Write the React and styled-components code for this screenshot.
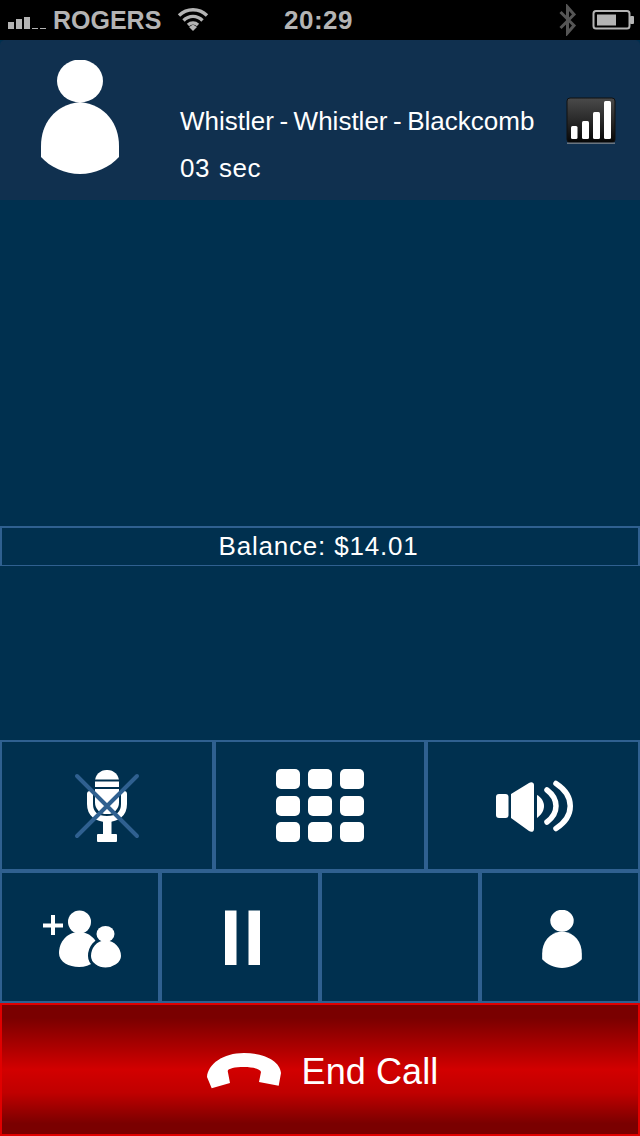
import React from 'react';
import styled, { createGlobalStyle } from 'styled-components';

const GlobalStyle = createGlobalStyle`
  html, body {
    margin: 0;
    padding: 0;
    background: #000;
  }
`;

const Screen = styled.div`
  width: 640px;
  height: 1136px;
  display: flex;
  flex-direction: column;
  overflow: hidden;
  background: #00304f;
  font-family: "Liberation Sans", Arial, sans-serif;
  color: #fff;
`;

const StatusBar = styled.div`
  height: 40px;
  flex: none;
  background: #000;
  display: grid;
  grid-template-columns: 1fr auto 1fr;
  align-items: center;
  color: #b4b4b4;
  font-size: 26px;
  font-weight: bold;
`;

const StatusLeft = styled.div`
  display: flex;
  align-items: center;
  padding-left: 8px;
`;

const Carrier = styled.span`
  margin-left: 5px;
  margin-right: 16px;
  font-size: 25px;
`;

const Clock = styled.span`
  margin-left: -3px;
  letter-spacing: 0.5px;
`;

const StatusRight = styled.div`
  display: flex;
  align-items: center;
  justify-content: flex-end;
  gap: 15px;
  padding-right: 6px;
`;

const CallHeader = styled.header`
  height: 160px;
  flex: none;
  box-sizing: border-box;
  background: #10304f;
  border-radius: 5px 5px 0 0;
  display: flex;
  padding-left: 41px;
  padding-right: 24px;
`;

const AvatarIcon = styled.svg`
  width: 78px;
  height: 114px;
  margin-top: 20px;
  flex: none;
`;

const CallInfo = styled.div`
  margin-left: 61px;
  flex: 1;
  padding-top: 66px;
  font-size: 26px;
  line-height: 30px;
  white-space: nowrap;
  word-spacing: -1.7px;
`;

const Duration = styled.div`
  margin-top: 17px;
  word-spacing: 1px;
  letter-spacing: 0.6px;
`;

const QualityIcon = styled.svg`
  width: 50px;
  height: 48px;
  margin-top: 57px;
  flex: none;
`;

const QualityBarGroup = styled.g`
  fill: #fff;
  filter: blur(0.6px);
`;

const Middle = styled.main`
  flex: 1;
  padding-top: 326px;
`;

const Balance = styled.div`
  height: 40px;
  box-sizing: border-box;
  border: 2px solid #2f6090;
  border-bottom-width: 1px;
  display: flex;
  align-items: center;
  justify-content: center;
  padding-right: 3px;
  font-size: 26px;
  letter-spacing: 0.8px;
`;

const ButtonRow = styled.div`
  display: grid;
  grid-template-columns: ${p => p.$columns};
  height: ${p => p.$height}px;
  flex: none;
`;

const CallButton = styled.div`
  box-sizing: border-box;
  border: 2px solid #2f6090;
  display: flex;
  align-items: center;
  justify-content: center;
`;

const Icon = styled.svg`
  display: block;
  flex: none;
`;

const BarsIcon = styled(Icon)`
  margin-top: 6px;
`;

const SmallPersonIcon = styled(Icon)`
  margin-left: 4px;
  margin-top: 3px;
`;

const PauseIcon = styled(Icon)`
  filter: blur(0.5px);
`;

const HandsetIcon = styled(Icon)`
  margin-top: -2px;
`;

const EndCall = styled.div`
  height: 133px;
  flex: none;
  box-sizing: border-box;
  border: 2px solid #e00000;
  background: linear-gradient(
    to bottom,
    #7a0000 0%,
    #7a0000 10%,
    #d20000 50%,
    #c00000 68%,
    #7a0000 92%,
    #7a0000 100%
  );
  display: flex;
  align-items: center;
  justify-content: center;
  gap: 21px;
  font-size: 36px;
  letter-spacing: 0.1px;
  padding-left: 5px;
  padding-top: 4px;
`;

const PERSON_PATH =
  'M80 102C106 105 119 124 119 146L119 157C110 167 95 174 80 174C65 174 50 167 41 157L41 146C41 124 54 105 80 102Z';

const Person = () => (
  <>
    <ellipse cx="80" cy="81" rx="23" ry="21.500" fill="#fff" />
    <path d={PERSON_PATH} fill="#fff" />
  </>
);

const SignalBars = () => (
  <BarsIcon width="40" height="14" viewBox="8 16 40 14" fill="#b4b4b4">
    <rect x="8" y="22" width="6" height="7" />
    <rect x="16" y="19" width="6" height="10" />
    <rect x="24" y="17" width="6" height="12" />
    <rect x="32" y="28" width="6" height="1" />
    <rect x="40" y="28" width="6" height="1" />
  </BarsIcon>
);

const Wifi = () => (
  <Icon width="32" height="24" viewBox="178 8 32 24" fill="none" stroke="#b4b4b4" strokeWidth="3.400">
    <path d="M180 15.500C188 7.800 200 7.800 208 15.500" />
    <path d="M184.500 20.500C190 15 198 15 203.500 20.500" />
    <path d="M189 25C192 22.300 196 22.300 199 25" />
    <path d="M194 31L190 27L194 24.500L198 27Z" fill="#b4b4b4" stroke="none" />
  </Icon>
);

const Bluetooth = () => (
  <Icon width="18" height="32" viewBox="560 3 18 32" fill="none" stroke="#555" strokeWidth="3">
    <path d="M561.500 11L575 24.500L568.500 32V6L575 13.500L561.500 27" />
  </Icon>
);

const Battery = () => (
  <Icon width="42" height="20" viewBox="592 9 42 20">
    <rect x="593.500" y="10" width="36" height="17.500" rx="2.500" fill="none" stroke="#b4b4b4" strokeWidth="2" />
    <rect x="597" y="13.500" width="19" height="11" fill="#b4b4b4" />
    <rect x="630" y="15" width="4" height="8" rx="1" fill="#b4b4b4" />
  </Icon>
);

const QualityBars = () => (
  <QualityIcon viewBox="566 97 50 48">
    <defs>
      <linearGradient id="quality" x1="0" y1="0" x2="0" y2="1">
        <stop offset="0" stopColor="#4a4a4a" />
        <stop offset="0.55" stopColor="#262626" />
        <stop offset="1" stopColor="#060606" />
      </linearGradient>
    </defs>
    <rect x="567" y="98" width="48" height="44.500" rx="3" fill="url(#quality)" stroke="#111" />
    <rect x="567" y="142.500" width="48" height="1.500" fill="#6a7580" />
    <QualityBarGroup>
      <rect x="571" y="126" width="6.500" height="13" rx="1.500" />
      <rect x="582" y="121" width="7" height="18" rx="1.500" />
      <rect x="593" y="112" width="7" height="27" rx="1.500" />
      <rect x="604" y="101" width="7" height="38" rx="1.500" />
    </QualityBarGroup>
  </QualityIcon>
);

const MicMuted = () => (
  <Icon width="74" height="81" viewBox="70 765 74 81">
    <rect x="95" y="770" width="24" height="44" rx="11.500" fill="#fff" />
    <g fill="#00304f">
      <rect x="95" y="779.500" width="24" height="2" />
      <rect x="95" y="787" width="24" height="2" />
    </g>
    <path
      d="M90 794V804C90 814 97 819 107 819C117 819 124 814 124 804V794"
      fill="none"
      stroke="#fff"
      strokeWidth="6"
      strokeLinecap="round"
    />
    <rect x="103" y="820" width="8.500" height="15" fill="#fff" />
    <rect x="97" y="834" width="20" height="8" rx="1" fill="#fff" />
    <path d="M77 776L137 836M137 776L77 836" stroke="#2f6090" strokeWidth="4" strokeLinecap="round" />
  </Icon>
);

const KEY_COLUMNS = [276, 308, 340];
const KEY_ROWS = [769, 796, 822];

const Keypad = () => (
  <Icon width="100" height="81" viewBox="270 765 100 81" fill="#fff">
    {KEY_ROWS.map(y =>
      KEY_COLUMNS.map(x => <rect key={`${x}-${y}`} x={x} y={y} width="24" height="20" rx="5" />)
    )}
  </Icon>
);

const Speaker = () => (
  <Icon width="86" height="61" viewBox="490 775 86 61">
    <rect x="496" y="794" width="12.500" height="24" rx="3" fill="#fff" />
    <path
      d="M511 794L529 783C531 781.500 534 782 534 785V829C534 832 531 832.500 529 831L511 818Z"
      fill="#fff"
    />
    <path d="M537 795C541 797 544 801.500 544 806C544 811 541 815 537 818Z" fill="#fff" />
    <path
      d="M547 790C559 799 559 813 547 822M556 783.500C575 796 575 816 556 828.500"
      fill="none"
      stroke="#fff"
      strokeWidth="5.500"
      strokeLinecap="round"
    />
  </Icon>
);

const AddParticipant = () => (
  <Icon width="90" height="66" viewBox="35 904 90 66" fill="#fff">
    <path d="M43 923.500H63V927.500H43ZM51 915H55V935H51Z" />
    <circle cx="79.500" cy="922" r="11.500" />
    <path d="M79 932C91 932 99 942 99 952C99 960 91 967 79 967C69 967 59 962 59 953C59 942 67 932 79 932Z" />
    <path
      d="M105.500 939C116 939 122.500 948 122.500 956C122.500 964 113 969 105.500 969C98 969 89.500 964 89.500 956C89.500 948 95 939 105.500 939Z"
      stroke="#00304f"
      strokeWidth="3"
    />
    <ellipse cx="105.500" cy="934" rx="9" ry="8" />
  </Icon>
);

const Pause = () => (
  <PauseIcon width="50" height="64" viewBox="215 905 50 64" fill="#fff">
    <rect x="225" y="910.500" width="11.500" height="54.500" />
    <rect x="248.500" y="910.500" width="11.500" height="54.500" />
  </PauseIcon>
);

const Handset = () => (
  <HandsetIcon width="74" height="36" viewBox="206 1053 74 36" fill="#fff">
    <path d="M210.700 1088.300L206 1077C207 1064 222 1053 243 1053C263 1053 279 1061 280 1073L277.700 1085.700L258 1082L260 1072C259.500 1069 252 1067 243 1067C234 1067 227 1068.500 226.700 1071L229 1083Z" />
  </HandsetIcon>
);

export default function App() {
  return (
    <Screen>
      <GlobalStyle />
      <StatusBar>
        <StatusLeft>
          <SignalBars />
          <Carrier>ROGERS</Carrier>
          <Wifi />
        </StatusLeft>
        <Clock>20:29</Clock>
        <StatusRight>
          <Bluetooth />
          <Battery />
        </StatusRight>
      </StatusBar>

      <CallHeader>
        <AvatarIcon viewBox="41 60 78 114">
          <Person />
        </AvatarIcon>
        <CallInfo>
          <div>Whistler - Whistler - Blackcomb</div>
          <Duration>03 sec</Duration>
        </CallInfo>
        <QualityBars />
      </CallHeader>

      <Middle>
        <Balance>Balance: $14.01</Balance>
      </Middle>

      <ButtonRow $columns="214px 212px 214px" $height={131}>
        <CallButton><MicMuted /></CallButton>
        <CallButton><Keypad /></CallButton>
        <CallButton><Speaker /></CallButton>
      </ButtonRow>
      <ButtonRow $columns="repeat(4, 160px)" $height={132}>
        <CallButton><AddParticipant /></CallButton>
        <CallButton><Pause /></CallButton>
        <CallButton />
        <CallButton>
          <SmallPersonIcon width="40" height="58" viewBox="41 60 78 114">
            <Person />
          </SmallPersonIcon>
        </CallButton>
      </ButtonRow>

      <EndCall>
        <Handset />
        <span>End Call</span>
      </EndCall>
    </Screen>
  );
}
